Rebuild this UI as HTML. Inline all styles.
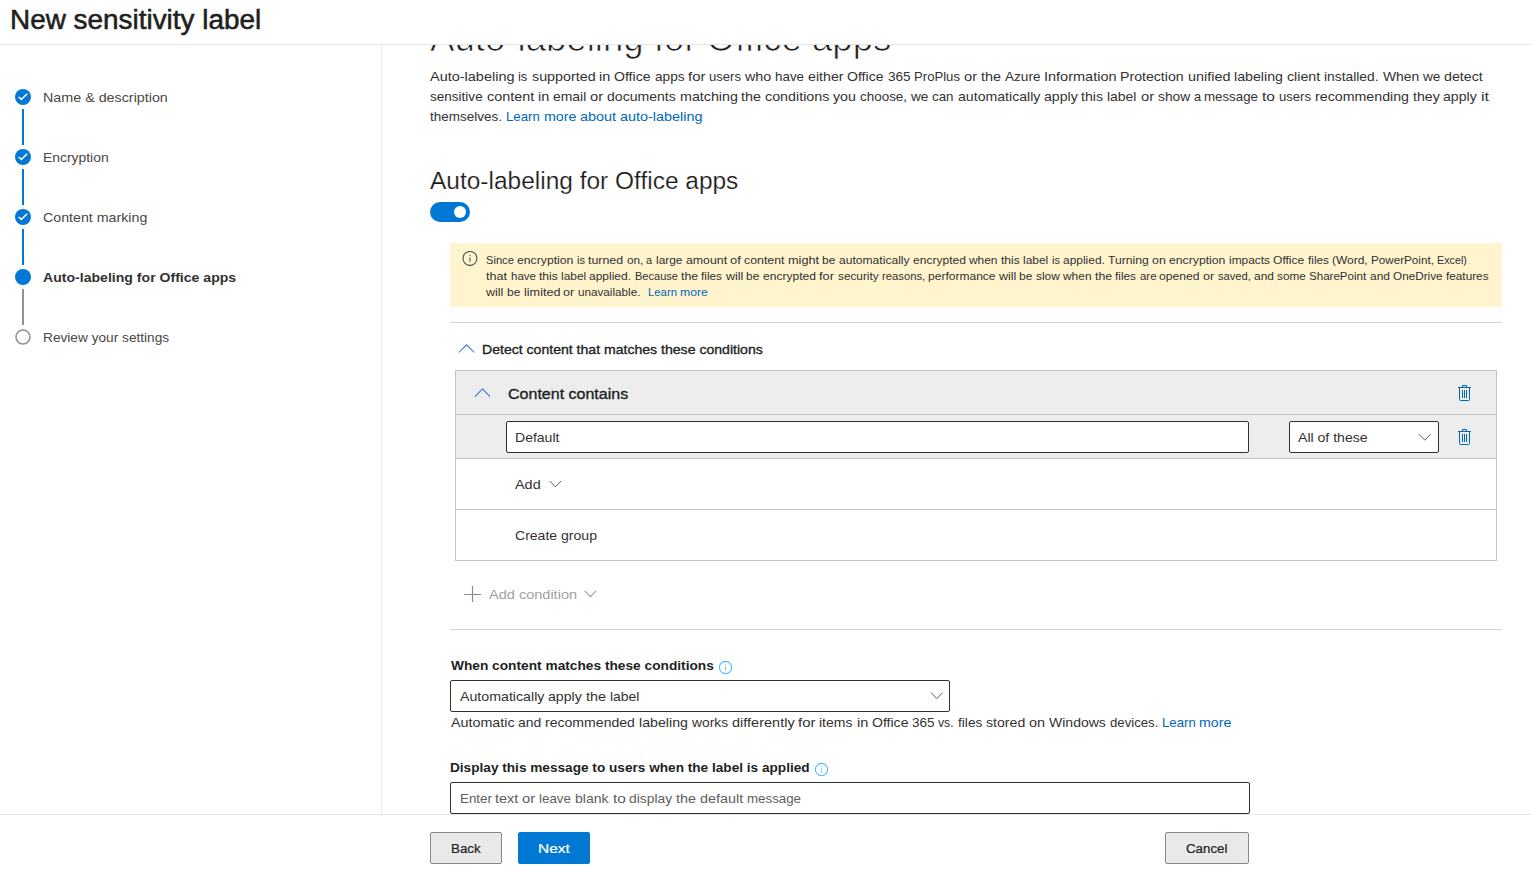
<!DOCTYPE html>
<html lang="en">
<head>
<meta charset="utf-8">
<title>New sensitivity label</title>
<style>
html,body{margin:0;padding:0;}
h1,h2,h3,p{margin:0;font-weight:normal;}
a{text-decoration:none;display:block;}
body{width:1531px;height:872px;overflow:hidden;background:#fff;position:relative;
  font-family:"Liberation Sans",sans-serif;color:#323130;font-size:14px;}
.t{position:absolute;white-space:nowrap;transform-origin:0 0;}
.wl{position:absolute;white-space:pre;}
.wl span{position:absolute;top:0;transform-origin:0 0;}
.abs{position:absolute;}
svg{position:absolute;overflow:visible;}
#hdr{position:absolute;left:0;top:0;width:1531px;height:44px;background:#fff;border-bottom:1px solid #e6e6e6;z-index:5;}
#vdiv{position:absolute;left:381px;top:45px;width:1px;height:769px;background:#ebebeb;}
.dot{position:absolute;left:15px;width:16px;height:16px;border-radius:50%;background:#0078d4;}
.conn{position:absolute;left:22px;width:2px;height:36px;background:#0078d4;}
#footer{position:absolute;left:0;top:814px;width:1531px;height:58px;background:#fff;border-top:1px solid #e6e6e6;box-sizing:border-box;z-index:5;}
.btn{position:absolute;top:832px;height:32px;box-sizing:border-box;border:1px solid #8a8886;background:#e9e9e9;border-radius:2px;z-index:6;}
.box{position:absolute;box-sizing:border-box;border:1px solid #323130;border-radius:2px;background:#fff;}
.hr{position:absolute;left:450px;width:1052px;height:1px;background:#d2d2d2;}
.sep{position:absolute;left:456px;width:1040px;height:1px;background:#c4c4c4;}
</style>
</head>
<body>
<!-- header -->
<div id="hdr"></div>

<!-- left nav -->
<div id="vdiv"></div>
<div class="conn" style="top:109px"></div>
<div class="conn" style="top:169px"></div>
<div class="conn" style="top:229px"></div>
<div class="conn" style="top:289px;background:#929190"></div>
<div class="dot" style="top:89px"><svg width="16" height="16" viewBox="0 0 16 16"><path d="M3.7 8 L6.4 10.4 L12.2 4.8" fill="none" stroke="#fff" stroke-width="1.5"/></svg></div>
<div class="dot" style="top:149px"><svg width="16" height="16" viewBox="0 0 16 16"><path d="M3.7 8 L6.4 10.4 L12.2 4.8" fill="none" stroke="#fff" stroke-width="1.5"/></svg></div>
<div class="dot" style="top:209px"><svg width="16" height="16" viewBox="0 0 16 16"><path d="M3.7 8 L6.4 10.4 L12.2 4.8" fill="none" stroke="#fff" stroke-width="1.5"/></svg></div>
<div class="dot" style="top:269px"></div>
<svg style="left:15px;top:329px" width="16" height="16" viewBox="0 0 16 16"><circle cx="8" cy="8" r="7" fill="#fff" stroke="#929190" stroke-width="1.6"/></svg>

<!-- toggle -->
<div class="abs" id="toggle" style="left:430px;top:202px;width:40px;height:20px;border-radius:10px;background:#0078d4;"><div class="abs" style="left:24px;top:4px;width:12px;height:12px;border-radius:50%;background:#fff"></div></div>

<!-- warning -->
<div class="abs" id="warn" style="left:450px;top:243px;width:1052px;height:64px;background:#fff4ce;"></div>
<svg style="left:462px;top:251px" width="16" height="16" viewBox="0 0 16 16"><circle cx="7.95" cy="7.4" r="6.95" fill="none" stroke="#484644" stroke-width="1.05"/><rect x="7.45" y="6.4" width="1" height="4.3" fill="#484644"/><rect x="7.45" y="3.9" width="1" height="1.2" fill="#484644"/></svg>

<div class="hr" style="top:322px"></div>

<!-- detect -->
<svg style="left:457px;top:341px" width="20" height="14" viewBox="0 0 20 14"><path d="M1.8 11.5 L9.5 3.8 L17.2 11.5" fill="none" stroke="#2f70cf" stroke-width="1.05"/></svg>

<!-- condition box -->
<div class="abs" id="cbox" style="left:455px;top:370px;width:1042px;height:191px;box-sizing:border-box;border:1px solid #c4c4c4;background:#fff"></div>
<div class="abs" style="left:456px;top:371px;width:1040px;height:43px;background:#ededed"></div>
<div class="sep" style="top:414px"></div>
<div class="abs" style="left:456px;top:415px;width:1040px;height:43px;background:#ededed"></div>
<div class="sep" style="top:458px"></div>
<div class="sep" style="top:509px"></div>
<svg style="left:472px;top:385px" width="20" height="14" viewBox="0 0 20 14"><path d="M2.9 11.6 L10.5 4 L18.1 11.6" fill="none" stroke="#2f70cf" stroke-width="1.05"/></svg>
<div class="box" style="left:506px;top:421px;width:743px;height:32px"></div>
<div class="box" style="left:1289px;top:421px;width:150px;height:32px"></div>
<svg style="left:1417px;top:431px" width="16" height="12" viewBox="0 0 16 12"><path d="M1.9 3.2 L7.8 9.2 L13.7 3.2" fill="none" stroke="#605e5c" stroke-width="1"/></svg>
<svg style="left:1457px;top:384px" width="16" height="18" viewBox="0 0 16 18"><g fill="none" stroke="#0067b8" stroke-width="1"><path d="M1 3.5 H14"/><path d="M5.5 3.5 V1.5 H9.5 V3.5"/><path d="M2.5 3.5 V15.5 a1 1 0 0 0 1 1 H11.5 a1 1 0 0 0 1 -1 V3.5"/><path d="M5.5 6 V14 M7.5 6 V14 M9.5 6 V14"/></g></svg>
<svg style="left:1457px;top:428px" width="16" height="18" viewBox="0 0 16 18"><g fill="none" stroke="#0067b8" stroke-width="1"><path d="M1 3.5 H14"/><path d="M5.5 3.5 V1.5 H9.5 V3.5"/><path d="M2.5 3.5 V15.5 a1 1 0 0 0 1 1 H11.5 a1 1 0 0 0 1 -1 V3.5"/><path d="M5.5 6 V14 M7.5 6 V14 M9.5 6 V14"/></g></svg>
<svg style="left:548px;top:478px" width="16" height="12" viewBox="0 0 16 12"><path d="M1.7 3 L7.4 8.8 L13.1 3" fill="none" stroke="#605e5c" stroke-width="1"/></svg>

<!-- add condition -->
<svg style="left:463px;top:585px" width="18" height="18" viewBox="0 0 18 18"><path d="M9.5 1 V17 M1 9.5 H18" fill="none" stroke="#8a8886" stroke-width="1.15"/></svg>
<svg style="left:583px;top:588px" width="16" height="12" viewBox="0 0 16 12"><path d="M1.8 2.8 L7.4 8.6 L13.1 2.8" fill="none" stroke="#a19f9d" stroke-width="1.1"/></svg>

<div class="hr" style="top:629px"></div>

<!-- when content matches -->
<svg style="left:718px;top:660px" width="15" height="15" viewBox="0 0 15 15"><circle cx="7.5" cy="7.5" r="6.1" fill="none" stroke="#4fbcff" stroke-width="1.1"/><rect x="7.1" y="5.8" width="0.8" height="5" fill="#6cc3fb"/><rect x="7.1" y="3.9" width="0.8" height="1" fill="#6cc3fb"/></svg>
<div class="box" style="left:450px;top:680px;width:500px;height:32px"></div>
<svg style="left:929px;top:690px" width="16" height="12" viewBox="0 0 16 12"><path d="M2.1 2.6 L7.8 8.6 L13.6 2.6" fill="none" stroke="#605e5c" stroke-width="1"/></svg>

<svg style="left:814px;top:761px" width="15" height="15" viewBox="0 0 15 15"><circle cx="7.5" cy="8.5" r="6.1" fill="none" stroke="#4fbcff" stroke-width="1.1"/><rect x="7.1" y="6.8" width="0.8" height="5" fill="#6cc3fb"/><rect x="7.1" y="4.9" width="0.8" height="1" fill="#6cc3fb"/></svg>
<div class="box" style="left:450px;top:782px;width:800px;height:32px"></div>

<!-- footer -->
<div id="footer"></div>
<div class="btn" style="left:430px;width:72px"></div>
<div class="btn" style="left:518px;width:72px;background:#0078d4;border-color:#0078d4"></div>
<div class="btn" style="left:1165px;width:84px"></div>

<h1 class="t" id="title" style="left:9.66px;top:3px;font-size:27px;line-height:34px;letter-spacing:0.0000px;color:#201f1e;transform:scaleX(1.03326);-webkit-text-stroke:0.55px #201f1e;z-index:6;">New sensitivity label</h1>
<div class="t" id="s1" style="left:43.11px;top:88px;font-size:13.5px;line-height:19px;letter-spacing:0.0000px;color:#484644;transform:scaleX(1.05961);">Name &amp; description</div>
<div class="t" id="s2" style="left:43.15px;top:148px;font-size:13.5px;line-height:19px;letter-spacing:0.0000px;color:#484644;transform:scaleX(1.02965);">Encryption</div>
<div class="t" id="s3" style="left:42.70px;top:208px;font-size:13.5px;line-height:19px;letter-spacing:0.0000px;color:#484644;transform:scaleX(1.05288);">Content marking</div>
<div class="t" id="s4" style="left:42.65px;top:268px;font-size:13.5px;line-height:19px;letter-spacing:0.0000px;color:#323130;transform:scaleX(1.04291);font-weight:bold;">Auto-labeling for Office apps</div>
<div class="t" id="s5" style="left:43.02px;top:328px;font-size:13.5px;line-height:19px;letter-spacing:0.0000px;color:#484644;transform:scaleX(1.01301);">Review your settings</div>
<h2 class="t" id="h1" style="left:430.12px;top:16px;font-size:36px;line-height:45px;letter-spacing:0.0000px;color:#201f1e;transform:scaleX(1.01707);-webkit-text-stroke:0.7px #ffffff;">Auto-labeling for Office apps</h2>
<h3 class="t" id="h2" style="left:429.92px;top:166px;font-size:23.5px;line-height:30px;letter-spacing:0.0000px;color:#1b1a19;transform:scaleX(1.04137);-webkit-text-stroke:0.2px #ffffff;">Auto-labeling for Office apps</h3>
<div class="t" id="det" style="left:481.50px;top:340px;font-size:13.5px;line-height:19px;letter-spacing:0.0000px;color:#201f1e;transform:scaleX(1.04204);-webkit-text-stroke:0.35px #201f1e;">Detect content that matches these conditions</div>
<div class="t" id="cc" style="left:507.70px;top:383px;font-size:15.5px;line-height:21px;letter-spacing:0.0000px;color:#201f1e;transform:scaleX(1.03333);-webkit-text-stroke:0.35px #201f1e;">Content contains</div>
<div class="t" id="def" style="left:515.46px;top:428px;font-size:13.5px;line-height:19px;letter-spacing:0.0000px;color:#323130;transform:scaleX(1.03858);">Default</div>
<div class="t" id="aot" style="left:1298.18px;top:428px;font-size:13.5px;line-height:19px;letter-spacing:0.0000px;color:#323130;transform:scaleX(1.04181);">All of these</div>
<div class="t" id="add" style="left:515.28px;top:475px;font-size:13.5px;line-height:19px;letter-spacing:0.0000px;color:#323130;transform:scaleX(1.06841);">Add</div>
<div class="t" id="cg" style="left:515.06px;top:526px;font-size:13.5px;line-height:19px;letter-spacing:0.0000px;color:#323130;transform:scaleX(1.03998);">Create group</div>
<div class="t" id="ac" style="left:488.77px;top:585px;font-size:13.5px;line-height:19px;letter-spacing:0.0000px;color:#a19f9d;transform:scaleX(1.07628);">Add condition</div>
<label class="t" id="wc" style="left:450.83px;top:656px;font-size:13.5px;line-height:19px;letter-spacing:0.0000px;color:#201f1e;transform:scaleX(1.01559);font-weight:bold;">When content matches these conditions</label>
<label class="t" id="dm" style="left:450.46px;top:758px;font-size:13.5px;line-height:19px;letter-spacing:0.0000px;color:#201f1e;transform:scaleX(1.00922);font-weight:bold;">Display this message to users when the label is applied</label>
<div class="t" id="back" role="button" style="left:450.82px;top:839px;font-size:13.5px;line-height:19px;letter-spacing:0.0000px;color:#201f1e;transform:scaleX(0.98662);-webkit-text-stroke:0.22px #201f1e;z-index:7;">Back</div>
<div class="t" id="next" role="button" style="left:538.39px;top:839px;font-size:13.5px;line-height:19px;letter-spacing:0.0000px;color:#ffffff;transform:scaleX(1.14235);-webkit-text-stroke:0.22px #ffffff;z-index:7;">Next</div>
<div class="t" id="cancel" role="button" style="left:1186.14px;top:839px;font-size:13.5px;line-height:19px;letter-spacing:0.0000px;color:#201f1e;transform:scaleX(0.98558);-webkit-text-stroke:0.22px #201f1e;z-index:7;">Cancel</div>
<p class="wl" id="p1" style="left:430.20px;top:67px;font-size:13.5px;line-height:19px;height:19px;color:#323130"><span id="p1_0" style="left:0.00px;transform:scaleX(1.0719)">Auto-labeling </span><span id="p1_1" style="left:88.31px;transform:scaleX(0.9567)">is </span><span id="p1_2" style="left:101.47px;transform:scaleX(1.0606)">supported </span><span id="p1_3" style="left:168.99px;transform:scaleX(1.0754)">in </span><span id="p1_4" style="left:184.14px;transform:scaleX(1.0423)">Office </span><span id="p1_5" style="left:224.47px;transform:scaleX(1.0079)">apps </span><span id="p1_6" style="left:257.81px;transform:scaleX(1.1074)">for </span><span id="p1_7" style="left:279.10px;transform:scaleX(0.9688)">users </span><span id="p1_8" style="left:314.92px;transform:scaleX(1.0595)">who </span><span id="p1_9" style="left:345.00px;transform:scaleX(0.9925)">have </span><span id="p1_10" style="left:377.89px;transform:scaleX(1.0527)">either </span><span id="p1_11" style="left:417.29px;transform:scaleX(1.0423)">Office </span><span id="p1_12" style="left:457.62px;transform:scaleX(1.0045)">365 </span><span id="p1_13" style="left:484.08px;transform:scaleX(0.9728)">ProPlus </span><span id="p1_14" style="left:533.91px;transform:scaleX(1.0879)">or </span><span id="p1_15" style="left:550.81px;transform:scaleX(1.0638)">the </span><span id="p1_16" style="left:574.63px;transform:scaleX(1.0054)">Azure </span><span id="p1_17" style="left:613.93px;transform:scaleX(1.0738)">Information </span><span id="p1_18" style="left:690.30px;transform:scaleX(1.0475)">Protection </span><span id="p1_19" style="left:757.82px;transform:scaleX(1.0695)">unified </span><span id="p1_20" style="left:804.22px;transform:scaleX(1.0526)">labeling </span><span id="p1_21" style="left:857.05px;transform:scaleX(1.0542)">client </span><span id="p1_22" style="left:894.10px;transform:scaleX(1.0222)">installed. </span><span id="p1_23" style="left:952.42px;transform:scaleX(1.0275)">When </span><span id="p1_24" style="left:992.50px;transform:scaleX(1.0100)">we </span><span id="p1_25" style="left:1013.77px;transform:scaleX(1.0556)">detect</span></p>
<p class="wl" id="p2" style="left:430.20px;top:87px;font-size:13.5px;line-height:19px;height:19px;color:#323130"><span id="p2_0" style="left:0.00px;transform:scaleX(1.0025)">sensitive </span><span id="p2_1" style="left:56.50px;transform:scaleX(1.0680)">content </span><span id="p2_2" style="left:107.64px;transform:scaleX(1.0755)">in </span><span id="p2_3" style="left:122.78px;transform:scaleX(1.0315)">email </span><span id="p2_4" style="left:159.90px;transform:scaleX(1.0880)">or </span><span id="p2_5" style="left:176.81px;transform:scaleX(1.0418)">documents </span><span id="p2_6" style="left:249.45px;transform:scaleX(1.0562)">matching </span><span id="p2_7" style="left:311.15px;transform:scaleX(1.0639)">the </span><span id="p2_8" style="left:334.96px;transform:scaleX(1.0594)">conditions </span><span id="p2_9" style="left:403.21px;transform:scaleX(1.0511)">you </span><span id="p2_10" style="left:429.93px;transform:scaleX(0.9954)">choose, </span><span id="p2_11" style="left:480.85px;transform:scaleX(1.0101)">we </span><span id="p2_12" style="left:502.12px;transform:scaleX(0.9874)">can </span><span id="p2_13" style="left:527.46px;transform:scaleX(1.0462)">automatically </span><span id="p2_14" style="left:613.73px;transform:scaleX(1.0452)">apply </span><span id="p2_15" style="left:651.30px;transform:scaleX(1.0464)">this </span><span id="p2_16" style="left:677.13px;transform:scaleX(1.0321)">label </span><span id="p2_17" style="left:710.41px;transform:scaleX(1.0880)">or </span><span id="p2_18" style="left:727.32px;transform:scaleX(1.0211)">show </span><span id="p2_19" style="left:763.33px;transform:scaleX(0.9475)">a </span><span id="p2_20" style="left:774.29px;transform:scaleX(0.9846)">message </span><span id="p2_21" style="left:832.06px;transform:scaleX(1.1489)">to </span><span id="p2_22" style="left:848.84px;transform:scaleX(0.9689)">users </span><span id="p2_23" style="left:884.66px;transform:scaleX(1.0528)">recommending </span><span id="p2_24" style="left:982.51px;transform:scaleX(1.0479)">they </span><span id="p2_25" style="left:1013.10px;transform:scaleX(1.0452)">apply </span><span id="p2_26" style="left:1050.67px;transform:scaleX(1.2048)">it</span></p>
<p class="wl" id="p3a" style="left:430.20px;top:107px;font-size:13.5px;line-height:19px;height:19px;color:#323130"><span id="p3a_0" style="left:0.00px;transform:scaleX(0.9982)">themselves.</span></p>
<a class="wl" id="p3b" href="#" style="left:506.00px;top:107px;font-size:13.5px;line-height:19px;height:19px;color:#0067b8"><span id="p3b_0" style="left:0.00px;transform:scaleX(0.9771)">Learn </span><span id="p3b_1" style="left:37.56px;transform:scaleX(1.0524)">more </span><span id="p3b_2" style="left:73.77px;transform:scaleX(1.0689)">about </span><span id="p3b_3" style="left:113.72px;transform:scaleX(1.0656)">auto-labeling</span></a>
<div class="wl" id="w1" style="left:486.30px;top:252px;font-size:11.5px;line-height:16px;height:16px;color:#323130"><span id="w1_0" style="left:0.00px;transform:scaleX(0.9681)">Since </span><span id="w1_1" style="left:31.15px;transform:scaleX(1.0626)">encryption </span><span id="w1_2" style="left:90.81px;transform:scaleX(0.9612)">is </span><span id="w1_3" style="left:102.09px;transform:scaleX(1.0773)">turned </span><span id="w1_4" style="left:140.50px;transform:scaleX(1.0254)">on, </span><span id="w1_5" style="left:160.19px;transform:scaleX(0.9521)">a </span><span id="w1_6" style="left:169.58px;transform:scaleX(1.0362)">large </span><span id="w1_7" style="left:199.36px;transform:scaleX(1.0710)">amount </span><span id="w1_8" style="left:243.73px;transform:scaleX(1.1238)">of </span><span id="w1_9" style="left:257.80px;transform:scaleX(1.0739)">content </span><span id="w1_10" style="left:301.60px;transform:scaleX(1.1072)">might </span><span id="w1_11" style="left:336.03px;transform:scaleX(1.0406)">be </span><span id="w1_12" style="left:352.63px;transform:scaleX(1.0519)">automatically </span><span id="w1_13" style="left:426.52px;transform:scaleX(1.0492)">encrypted </span><span id="w1_14" style="left:482.81px;transform:scaleX(1.0366)">when </span><span id="w1_15" style="left:514.59px;transform:scaleX(1.0519)">this </span><span id="w1_16" style="left:536.71px;transform:scaleX(1.0374)">label </span><span id="w1_17" style="left:565.22px;transform:scaleX(0.9612)">is </span><span id="w1_18" style="left:576.49px;transform:scaleX(1.0405)">applied. </span><span id="w1_19" style="left:621.70px;transform:scaleX(1.0568)">Turning </span><span id="w1_20" style="left:665.76px;transform:scaleX(1.0790)">on </span><span id="w1_21" style="left:682.85px;transform:scaleX(1.0626)">encryption </span><span id="w1_22" style="left:742.52px;transform:scaleX(1.0364)">impacts </span><span id="w1_23" style="left:786.87px;transform:scaleX(1.0481)">Office </span><span id="w1_24" style="left:821.41px;transform:scaleX(1.0228)">files </span><span id="w1_25" style="left:845.62px;transform:scaleX(1.0406)">(Word, </span><span id="w1_26" style="left:884.59px;transform:scaleX(1.0148)">PowerPoint, </span><span id="w1_27" style="left:950.81px;transform:scaleX(0.9355)">Excel)</span></div>
<div class="wl" id="w2" style="left:486.30px;top:268px;font-size:11.5px;line-height:16px;height:16px;color:#323130"><span id="w2_0" style="left:0.00px;transform:scaleX(1.0960)">that </span><span id="w2_1" style="left:24.32px;transform:scaleX(0.9993)">have </span><span id="w2_2" style="left:52.53px;transform:scaleX(1.0530)">this </span><span id="w2_3" style="left:74.67px;transform:scaleX(1.0385)">label </span><span id="w2_4" style="left:103.20px;transform:scaleX(1.0416)">applied. </span><span id="w2_5" style="left:148.46px;transform:scaleX(0.9597)">Because </span><span id="w2_6" style="left:194.71px;transform:scaleX(1.0708)">the </span><span id="w2_7" style="left:215.13px;transform:scaleX(1.0239)">files </span><span id="w2_8" style="left:239.36px;transform:scaleX(1.0884)">will </span><span id="w2_9" style="left:260.05px;transform:scaleX(1.0417)">be </span><span id="w2_10" style="left:276.67px;transform:scaleX(1.0503)">encrypted </span><span id="w2_11" style="left:333.01px;transform:scaleX(1.1154)">for </span><span id="w2_12" style="left:351.27px;transform:scaleX(1.0261)">security </span><span id="w2_13" style="left:395.22px;transform:scaleX(0.9786)">reasons, </span><span id="w2_14" style="left:441.67px;transform:scaleX(1.0461)">performance </span><span id="w2_15" style="left:512.50px;transform:scaleX(1.0884)">will </span><span id="w2_16" style="left:533.18px;transform:scaleX(1.0417)">be </span><span id="w2_17" style="left:549.80px;transform:scaleX(1.0301)">slow </span><span id="w2_18" style="left:576.79px;transform:scaleX(1.0377)">when </span><span id="w2_19" style="left:608.62px;transform:scaleX(1.0708)">the </span><span id="w2_20" style="left:629.04px;transform:scaleX(1.0239)">files </span><span id="w2_21" style="left:653.27px;transform:scaleX(0.9960)">are </span><span id="w2_22" style="left:673.11px;transform:scaleX(1.0553)">opened </span><span id="w2_23" style="left:716.90px;transform:scaleX(1.0953)">or </span><span id="w2_24" style="left:731.39px;transform:scaleX(0.9705)">saved, </span><span id="w2_25" style="left:767.57px;transform:scaleX(1.0404)">and </span><span id="w2_26" style="left:790.82px;transform:scaleX(1.0219)">some </span><span id="w2_27" style="left:822.85px;transform:scaleX(1.0059)">SharePoint </span><span id="w2_28" style="left:883.38px;transform:scaleX(1.0404)">and </span><span id="w2_29" style="left:906.63px;transform:scaleX(1.0218)">OneDrive </span><span id="w2_30" style="left:959.55px;transform:scaleX(1.0237)">features</span></div>
<div class="wl" id="w3a" style="left:486.30px;top:284px;font-size:11.5px;line-height:16px;height:16px;color:#323130"><span id="w3a_0" style="left:0.00px;transform:scaleX(1.0901)">will </span><span id="w3a_1" style="left:20.72px;transform:scaleX(1.0434)">be </span><span id="w3a_2" style="left:37.36px;transform:scaleX(1.0991)">limited </span><span id="w3a_3" style="left:77.18px;transform:scaleX(1.0970)">or </span><span id="w3a_4" style="left:91.70px;transform:scaleX(1.0164)">unavailable.</span></div>
<a class="wl" id="w3b" href="#" style="left:647.70px;top:284px;font-size:11.5px;line-height:16px;height:16px;color:#0067b8"><span id="w3b_0" style="left:0.00px;transform:scaleX(0.9854)">Learn </span><span id="w3b_1" style="left:32.28px;transform:scaleX(1.0617)">more</span></a>
<div class="wl" id="aal" style="left:459.90px;top:687px;font-size:13.5px;line-height:19px;height:19px;color:#323130"><span id="aal_0" style="left:0.00px;transform:scaleX(1.0515)">Automatically </span><span id="aal_1" style="left:88.27px;transform:scaleX(1.0462)">apply </span><span id="aal_2" style="left:125.88px;transform:scaleX(1.0651)">the </span><span id="aal_3" style="left:149.72px;transform:scaleX(1.0332)">label</span></div>
<div class="wl" id="hlpa" style="left:450.70px;top:713px;font-size:13.5px;line-height:19px;height:19px;color:#323130"><span id="hlpa_0" style="left:0.00px;transform:scaleX(1.0595)">Automatic </span><span id="hlpa_1" style="left:67.43px;transform:scaleX(1.0323)">and </span><span id="hlpa_2" style="left:94.52px;transform:scaleX(1.0421)">recommended </span><span id="hlpa_3" style="left:188.28px;transform:scaleX(1.0516)">labeling </span><span id="hlpa_4" style="left:241.05px;transform:scaleX(1.0223)">works </span><span id="hlpa_5" style="left:280.93px;transform:scaleX(1.0751)">differently </span><span id="hlpa_6" style="left:347.44px;transform:scaleX(1.1063)">for </span><span id="hlpa_7" style="left:368.71px;transform:scaleX(1.0357)">items </span><span id="hlpa_8" style="left:405.95px;transform:scaleX(1.0744)">in </span><span id="hlpa_9" style="left:421.08px;transform:scaleX(1.0413)">Office </span><span id="hlpa_10" style="left:461.37px;transform:scaleX(1.0035)">365 </span><span id="hlpa_11" style="left:487.81px;transform:scaleX(0.9070)">vs. </span><span id="hlpa_12" style="left:507.30px;transform:scaleX(1.0159)">files </span><span id="hlpa_13" style="left:535.53px;transform:scaleX(1.0464)">stored </span><span id="hlpa_14" style="left:578.63px;transform:scaleX(1.0714)">on </span><span id="hlpa_15" style="left:598.57px;transform:scaleX(1.0380)">Windows </span><span id="hlpa_16" style="left:659.24px;transform:scaleX(0.9763)">devices.</span></div>
<a class="wl" id="hlpb" href="#" style="left:1161.80px;top:713px;font-size:13.5px;line-height:19px;height:19px;color:#0067b8"><span id="hlpb_0" style="left:0.00px;transform:scaleX(0.9779)">Learn </span><span id="hlpb_1" style="left:37.60px;transform:scaleX(1.0532)">more</span></a>
<div class="wl" id="ph" style="left:459.50px;top:789px;font-size:13.5px;line-height:19px;height:19px;color:#605e5c"><span id="ph_0" style="left:0.00px;transform:scaleX(0.9908)">Enter </span><span id="ph_1" style="left:35.82px;transform:scaleX(1.0688)">text </span><span id="ph_2" style="left:62.93px;transform:scaleX(1.0897)">or </span><span id="ph_3" style="left:79.86px;transform:scaleX(0.9882)">leave </span><span id="ph_4" style="left:115.60px;transform:scaleX(1.0429)">blank </span><span id="ph_5" style="left:153.11px;transform:scaleX(1.1507)">to </span><span id="ph_6" style="left:169.91px;transform:scaleX(1.0265)">display </span><span id="ph_7" style="left:216.90px;transform:scaleX(1.0656)">the </span><span id="ph_8" style="left:240.75px;transform:scaleX(1.0651)">default </span><span id="ph_9" style="left:287.78px;transform:scaleX(0.9861)">message</span></div>
</body>
</html>
